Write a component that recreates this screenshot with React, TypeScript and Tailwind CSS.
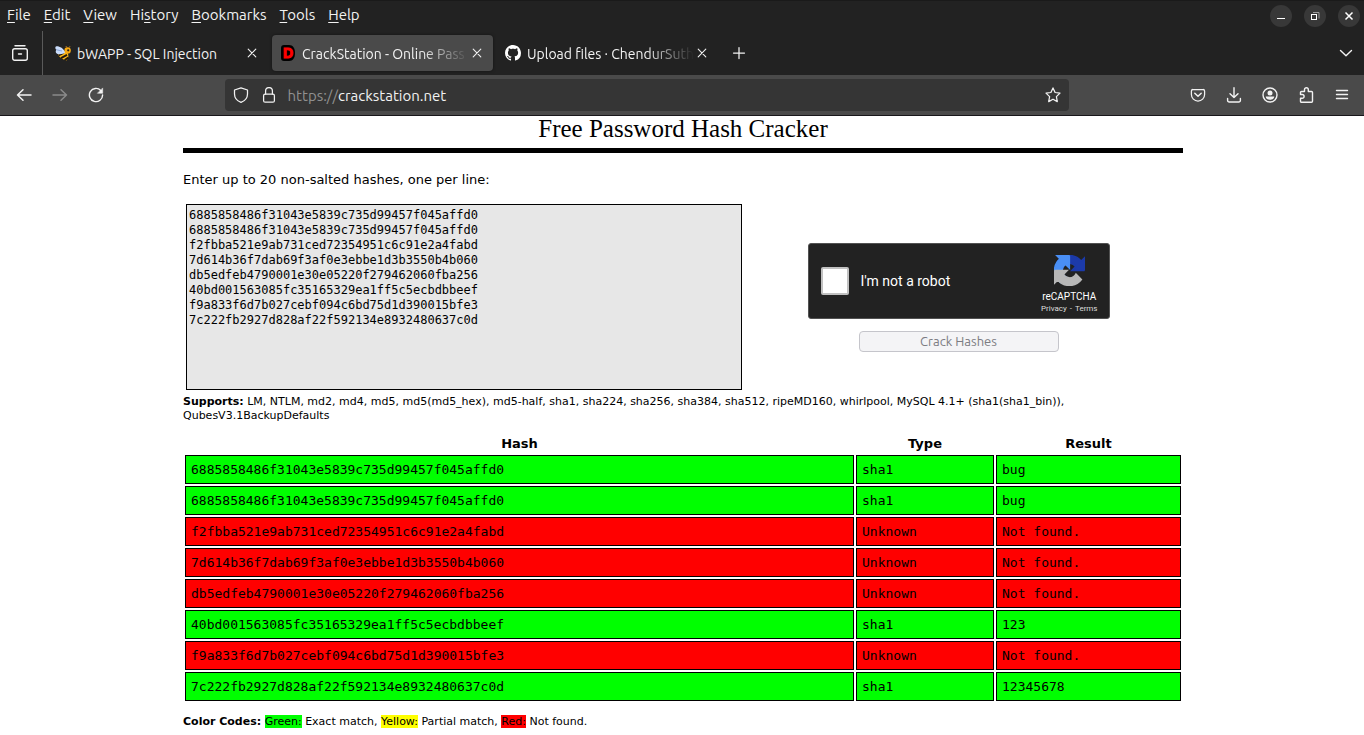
import type { ReactNode } from "react";

const UI_FONT = "font-['Ubuntu','Noto_Sans',sans-serif]";
const VERDANA = "font-['DejaVu_Sans',sans-serif]";
const MONO = "font-['DejaVu_Sans_Mono',monospace]";

const MENU: [string, string, string][] = [
  ["", "F", "ile"],
  ["", "E", "dit"],
  ["", "V", "iew"],
  ["Hi", "s", "tory"],
  ["", "B", "ookmarks"],
  ["", "T", "ools"],
  ["", "H", "elp"],
];

const RESULTS = [
  { hash: "6885858486f31043e5839c735d99457f045affd0", type: "sha1", result: "bug", found: true },
  { hash: "6885858486f31043e5839c735d99457f045affd0", type: "sha1", result: "bug", found: true },
  { hash: "f2fbba521e9ab731ced72354951c6c91e2a4fabd", type: "Unknown", result: "Not found.", found: false },
  { hash: "7d614b36f7dab69f3af0e3ebbe1d3b3550b4b060", type: "Unknown", result: "Not found.", found: false },
  { hash: "db5edfeb4790001e30e05220f279462060fba256", type: "Unknown", result: "Not found.", found: false },
  { hash: "40bd001563085fc35165329ea1ff5c5ecbdbbeef", type: "sha1", result: "123", found: true },
  { hash: "f9a833f6d7b027cebf094c6bd75d1d390015bfe3", type: "Unknown", result: "Not found.", found: false },
  { hash: "7c222fb2927d828af22f592134e8932480637c0d", type: "sha1", result: "12345678", found: true },
];

function Icon({ children, className = "" }: { children: ReactNode; className?: string }) {
  return (
    <svg
      viewBox="0 0 16 16"
      className={`size-4 shrink-0 ${className}`}
      fill="none"
      stroke="currentColor"
      strokeWidth="1.25"
      strokeLinecap="round"
      strokeLinejoin="round"
      aria-hidden="true"
    >
      {children}
    </svg>
  );
}

function IconButton({ label, children, className = "" }: { label: string; children: ReactNode; className?: string }) {
  return (
    <button type="button" aria-label={label} className={`flex h-8 w-9 shrink-0 items-center justify-center ${className}`}>
      {children}
    </button>
  );
}

function Bee() {
  return (
    <svg viewBox="0 0 16 16" className="size-4 shrink-0" aria-hidden="true">
      <path d="M2.800 8.500Q4 13.500 11.500 15.600 Q14.600 12 12.500 7.500 L9 6Z" fill="#fbb81a" />
      <path d="M3.600 10.300 8.500 8M6 13.200 12 9.800M9.600 15 13.400 12.600" stroke="#1f160c" strokeWidth="1.900" />
      <circle cx="12.600" cy="5.400" r="3.200" fill="#f7a911" />
      <circle cx="13.200" cy="5.300" r="1.100" fill="#2b1f10" />
      <path d="M11.500 2.500 11 1M14.200 2.500 15 1.200" stroke="#b9791b" strokeWidth="1" />
      <path d="M10 7.500C8.800 3.200 4.500 1 1.400 1.200-.2 1.700 0 3.800 1.600 4.800.2 5.600.4 8.400 2.600 9 5.200 9.500 8.600 9.200 10 7.500Z" fill="#c9dcfb" />
      <path d="M1.600 4.800 7 6" stroke="#7d9bd0" strokeWidth=".8" />
    </svg>
  );
}

function CrackLogo() {
  return (
    <svg viewBox="0 0 16 16" className="size-4 shrink-0" aria-hidden="true">
      <path d="M4 0h5c4 0 6 3.500 6 8s-2 8-6 8H4a3 3 0 0 1-3-3V3a3 3 0 0 1 3-3Z" fill="#000" />
      <text
        x="8"
        y="13"
        textAnchor="middle"
        fontSize="14"
        fontWeight="700"
        fontFamily="Liberation Sans"
        fill="#f00"
        stroke="#f00"
        strokeWidth="1"
      >
        D
      </text>
    </svg>
  );
}

function GitHub() {
  return (
    <svg viewBox="0 0 16 16" className="size-4 shrink-0" fill="#fff" aria-hidden="true">
      <path d="M8 0C3.58 0 0 3.58 0 8c0 3.54 2.29 6.53 5.47 7.59.4.07.55-.17.55-.38 0-.19-.01-.82-.01-1.49-2.01.37-2.53-.49-2.69-.94-.09-.23-.48-.94-.82-1.13-.28-.15-.68-.52-.01-.53.63-.01 1.08.58 1.23.82.72 1.21 1.87.87 2.33.66.07-.52.28-.87.51-1.07-1.78-.2-3.64-.89-3.64-3.95 0-.87.31-1.59.82-2.15-.08-.2-.36-1.02.08-2.12 0 0 .67-.21 2.2.82.64-.18 1.32-.27 2-.27.68 0 1.36.09 2 .27 1.53-1.04 2.2-.82 2.2-.82.44 1.1.16 1.92.08 2.12.51.56.82 1.27.82 2.15 0 3.07-1.87 3.75-3.65 3.95.29.25.54.73.54 1.48 0 1.07-.01 1.93-.01 2.2 0 .21.15.46.55.38A8.013 8.013 0 0 0 16 8c0-4.42-3.58-8-8-8z" />
    </svg>
  );
}

function Tab({ icon, title, active = false, fade = false }: { icon: ReactNode; title: string; active?: boolean; fade?: boolean }) {
  return (
    <div
      className={`flex h-9 w-[221px] items-center rounded px-2 ${active ? "bg-[#4a4a4a] shadow-[0_0_3px_rgba(0,0,0,0.5)]" : ""}`}
    >
      {icon}
      <span
        className={`ml-1.5 min-w-0 flex-1 overflow-hidden whitespace-nowrap pt-0.5 ${
          fade ? "[mask-image:linear-gradient(to_left,transparent,black_48px)]" : ""
        }`}
      >
        {title}
      </span>
      <button type="button" aria-label={`Close ${title}`} className="flex size-4 shrink-0 items-center justify-center">
        <Icon>
          <path d="M4.200 4.200l7.600 7.600M11.800 4.200l-7.600 7.600" strokeWidth="1.100" />
        </Icon>
      </button>
    </div>
  );
}

function WindowButton({ label, children }: { label: string; children: ReactNode }) {
  return (
    <button type="button" aria-label={label} className="flex size-[22px] items-center justify-center rounded-full bg-[#383838]">
      {children}
    </button>
  );
}

function Browser() {
  return (
    <header className={`${UI_FONT} border-b border-[#18161a] bg-[#222222] text-sm text-[#f2f2f2]`}>
      <div className="flex h-[31px] items-center justify-between border-t border-[#1a1a1a] pl-[7px] pr-1">
        <nav className="flex gap-[13px] pb-0.5 text-[15px]" aria-label="Menu bar">
          {MENU.map(([pre, key, post]) => (
            <button type="button" key={key + post} className="leading-5">
              {pre}
              <span className="underline underline-offset-2">{key}</span>
              {post}
            </button>
          ))}
        </nav>
        <div className="flex gap-3">
          <WindowButton label="Minimize">
            <svg viewBox="0 0 16 16" className="size-4" stroke="#fff" aria-hidden="true">
              <path d="M4 10.5h8" />
            </svg>
          </WindowButton>
          <WindowButton label="Restore">
            <svg viewBox="0 0 16 16" className="size-4" fill="none" aria-hidden="true">
              <path d="M6 4.500h6v6" stroke="#999" />
              <rect x="4.500" y="6.500" width="5" height="5" stroke="#fff" />
            </svg>
          </WindowButton>
          <WindowButton label="Close window">
            <svg viewBox="0 0 16 16" className="size-4" stroke="#fff" strokeWidth="1.500" aria-hidden="true">
              <path d="M4.500 4.500l7 7M11.500 4.500l-7 7" />
            </svg>
          </WindowButton>
        </div>
      </div>

      <div className="flex h-11 items-center">
        <div className="flex h-full w-[43px] shrink-0 items-center border-r border-[#5a5a5a] pl-0.5">
          <IconButton label="View recent browsing">
            <svg viewBox="0 0 18 18" className="size-[18px]" fill="none" stroke="currentColor" strokeWidth="1.4" strokeLinecap="round" aria-hidden="true">
              <path d="M4 1.800h10M7.500 10h3" />
              <rect x="1.700" y="4.800" width="14.600" height="11.500" rx="2" />
            </svg>
          </IconButton>
        </div>
        <div className="ml-1 flex gap-1">
          <Tab icon={<Bee />} title="bWAPP - SQL Injection" />
          <Tab icon={<CrackLogo />} title="CrackStation - Online Pass" active fade />
          <Tab icon={<GitHub />} title="Upload files · ChendurSuth" fade />
        </div>
        <IconButton label="New tab" className="ml-[3px]">
          <Icon>
            <path d="M8 2.500v11M2.500 8h11" />
          </Icon>
        </IconButton>
        <IconButton label="List all tabs" className="ml-auto">
          <Icon>
            <path d="M2.500 5.500 8 10.800l5.500-5.300" strokeWidth="1.400" />
          </Icon>
        </IconButton>
      </div>

      <div className="flex h-10 items-center bg-[#4a4a4a] px-1">
        <div className="flex shrink-0 pl-0.5">
          <IconButton label="Back">
            <Icon>
              <path d="M15 8H1.500M7 2.800 1.500 8 7 13.200" strokeWidth="1.500" />
            </Icon>
          </IconButton>
          <IconButton label="Forward" className="text-[#8a8a8a]">
            <Icon>
              <path d="M1 8h13.500M9 2.800 14.500 8 9 13.200" strokeWidth="1.500" />
            </Icon>
          </IconButton>
          <IconButton label="Reload">
            <Icon>
              <path d="M12.800 3.500A6.600 6.600 0 1 0 14.600 8" strokeWidth="1.400" />
              <path d="M14.700 1.300v5H9.700Z" fill="currentColor" strokeWidth=".5" />
            </Icon>
          </IconButton>
        </div>
        <div className="flex-[2]" />
        <div className="flex h-8 flex-[15] items-center rounded bg-[#353535] px-2">
          <button type="button" aria-label="Tracking protection" className="flex">
            <Icon>
              <path d="M8 .8 14.500 3v4c0 4-3 7-6.500 8.400C4.500 14 1.500 11 1.500 7V3Z" />
            </Icon>
          </button>
          <button type="button" aria-label="Site security" className="ml-3 flex">
            <Icon>
              <rect x="2.600" y="7.200" width="10.800" height="8" rx="1.500" />
              <path d="M4.600 7V4a3.400 3.400 0 0 1 6.800 0v3" />
            </Icon>
          </button>
          <div className="ml-[11px] flex min-w-0 flex-1 pt-0.5 text-[15px]">
            <span className="text-[#909090]">https://</span>
            <span>crackstation.net</span>
          </div>
          <button type="button" aria-label="Bookmark this page" className="flex">
            <Icon>
              <path d="M8 .9 10.100 5.500l4.900.6-3.600 3.500.9 5L8 12.200l-4.300 2.400.9-5L1 6.100l4.900-.6Z" />
            </Icon>
          </button>
        </div>
        <div className="flex-[2]" />
        <div className="flex shrink-0">
          <IconButton label="Save to Pocket">
            <Icon>
              <path d="M3 2.500h10A1.600 1.600 0 0 1 14.600 4v3.500a6.600 6.600 0 0 1-13.200 0V4A1.600 1.600 0 0 1 3 2.500Z" />
              <path d="M4.800 6.300 8 9.300l3.200-3" strokeWidth="1.500" />
            </Icon>
          </IconButton>
          <IconButton label="Downloads">
            <Icon>
              <path d="M8 .8v9.700M4 6.700l4 3.900 4-3.900M1.600 11.500v1.700A1.700 1.700 0 0 0 3.300 15h9.400a1.700 1.700 0 0 0 1.700-1.800v-1.700" strokeWidth="1.400" />
            </Icon>
          </IconButton>
          <IconButton label="Account">
            <Icon>
              <circle cx="8" cy="8" r="7" strokeWidth="1.400" />
              <circle cx="8" cy="5.900" r="2.500" fill="currentColor" stroke="none" />
              <path d="M3.700 9.500h8.600c0 2-1.900 3.300-4.300 3.300S3.700 11.500 3.700 9.500Z" fill="currentColor" stroke="none" />
            </Icon>
          </IconButton>
          <IconButton label="Extensions">
            <Icon>
              <path
                d="M2.500 7.500V5.500a1 1 0 0 1 1-1H6.500V2.600a1.900 1.900 0 0 1 3.800 0v1.900h3.200a1 1 0 0 1 1 1v8.700a1 1 0 0 1-1 1h-10a1 1 0 0 1-1-1v-2.900h1.700a1.900 1.900 0 0 0 0-3.800Z"
                strokeWidth="1.400"
              />
            </Icon>
          </IconButton>
          <IconButton label="Application menu">
            <Icon>
              <path d="M2.500 3.500h11M2.500 7.500h11M2.500 11.500h11" strokeWidth="1.400" />
            </Icon>
          </IconButton>
        </div>
      </div>
    </header>
  );
}

function Captcha() {
  return (
    <div className="flex h-[76px] w-[302px] items-center rounded-[3px] border border-[#525252] bg-[#222222] pl-3 pr-[11px] font-['Roboto',sans-serif] text-white">
      <input
        id="robot"
        type="checkbox"
        className="size-7 shrink-0 appearance-none rounded-xs border-2 border-[#c1c1c1] bg-white"
      />
      <label htmlFor="robot" className="ml-3 text-sm leading-4">
        I'm not a robot
      </label>
      <div className="ml-auto flex flex-col items-center pt-1.5">
        <svg viewBox="-1 -1 66 66" className="size-[31px]" strokeWidth="3" aria-hidden="true">
          <path fill="#1c3aa9" stroke="#1c3aa9" d="M64 31.955l-.033-1.37V4.687l-7.16 7.16C50.948 4.674 42.033.093 32.05.093c-10.4 0-19.622 4.96-25.458 12.64l11.736 11.86a15.55 15.55 0 0 1 4.754-5.334c2.05-1.6 4.952-2.906 8.968-2.906.485 0 .86.057 1.135.163 4.976.393 9.288 3.14 11.828 7.124l-8.307 8.307L64 31.953" />
          <path fill="#4a8ff5" stroke="#4a8ff5" d="M31.862.094l-1.37.033H4.594l7.16 7.16C4.58 13.147 0 22.06 0 32.046c0 10.4 4.96 19.622 12.64 25.458L24.5 45.768a15.55 15.55 0 0 1-5.334-4.754c-1.6-2.05-2.906-4.952-2.906-8.968 0-.485.057-.86.163-1.135.393-4.976 3.14-9.288 7.124-11.828l8.307 8.307L31.86.095" />
          <path fill="#b7b7b7" stroke="#b7b7b7" d="M.001 32.045l.033 1.37v25.898l7.16-7.16c5.86 7.173 14.774 11.754 24.76 11.754 10.4 0 19.622-4.96 25.458-12.64l-11.736-11.86a15.55 15.55 0 0 1-4.754 5.334c-2.05 1.6-4.952 2.906-8.968 2.906-.485 0-.86-.057-1.135-.163-4.976-.393-9.288-3.14-11.828-7.124l8.307-8.307L0 32.047" />
        </svg>
        <span className="mt-[3px] text-[10px] leading-4">reCAPTCHA</span>
        <div className="flex gap-[3px] text-[8px] leading-2 text-[#dddddd]">
          <a href="#privacy">Privacy</a>
          <span>-</span>
          <a href="#terms">Terms</a>
        </div>
      </div>
    </div>
  );
}

export default function App() {
  return (
    <div className="bg-white">
      <Browser />
      <div className="pl-0.5">
        <main className={`${VERDANA} mx-auto max-w-[1000px] text-black`}>
          <h1 className="border-b-5 border-black pb-1.5 text-center font-['Liberation_Serif',serif] text-[25px] leading-[26px]">
            Free Password Hash Cracker
          </h1>
          <label htmlFor="hashes" className="mt-[17px] block text-[13px] leading-5">
            Enter up to 20 non-salted hashes, one per line:
          </label>
          <div className="mt-3.5 flex">
            <textarea
              id="hashes"
              defaultValue={RESULTS.map((r) => r.hash).join("\n")}
              className={`${MONO} ml-[3px] block h-[186px] w-[556px] resize-none border border-black bg-[#e7e7e7] px-0.5 py-[3px] text-xs leading-[15px]`}
            />
            <div className="flex flex-1 flex-col items-center justify-center gap-3 pr-2">
              <Captcha />
              <button
                type="button"
                disabled
                className={`${UI_FONT} h-[21px] w-[200px] rounded border border-[#c5c5cb] bg-[#f4f4f6] text-[13px] leading-4 text-[#7c7c82]`}
              >
                Crack Hashes
              </button>
            </div>
          </div>
          <p className="mt-[5px] max-w-[900px] text-[11px] leading-[14px]">
            <b>Supports:</b> LM, NTLM, md2, md4, md5, md5(md5_hex), md5-half, sha1, sha224, sha256, sha384, sha512,
            ripeMD160, whirlpool, MySQL 4.1+ (sha1(sha1_bin)), QubesV3.1BackupDefaults
          </p>
          <table className="mt-2.5 w-full table-fixed border-separate border-spacing-0.5 text-[13px]">
            <colgroup>
              <col />
              <col className="w-[138px]" />
              <col className="w-[185px]" />
            </colgroup>
            <thead>
              <tr className="h-[18px] leading-4">
                <th>Hash</th>
                <th>Type</th>
                <th>Result</th>
              </tr>
            </thead>
            <tbody className={`${MONO} leading-[17px]`}>
              {RESULTS.map((row, i) => (
                <tr key={i} className={row.found ? "bg-[#00ff00]" : "bg-[#ff0000]"}>
                  <td className="border border-black p-[5px]">{row.hash}</td>
                  <td className="border border-black p-[5px]">{row.type}</td>
                  <td className="border border-black p-[5px]">{row.result}</td>
                </tr>
              ))}
            </tbody>
          </table>
          <p className="mt-3 pb-1 text-[11px] leading-[14px]">
            <b>Color Codes:</b> <span className="bg-[#00ff00]">Green:</span> Exact match,{" "}
            <span className="bg-[#ffff00]">Yellow:</span> Partial match, <span className="bg-[#ff0000]">Red:</span> Not
            found.
          </p>
        </main>
      </div>
    </div>
  );
}
